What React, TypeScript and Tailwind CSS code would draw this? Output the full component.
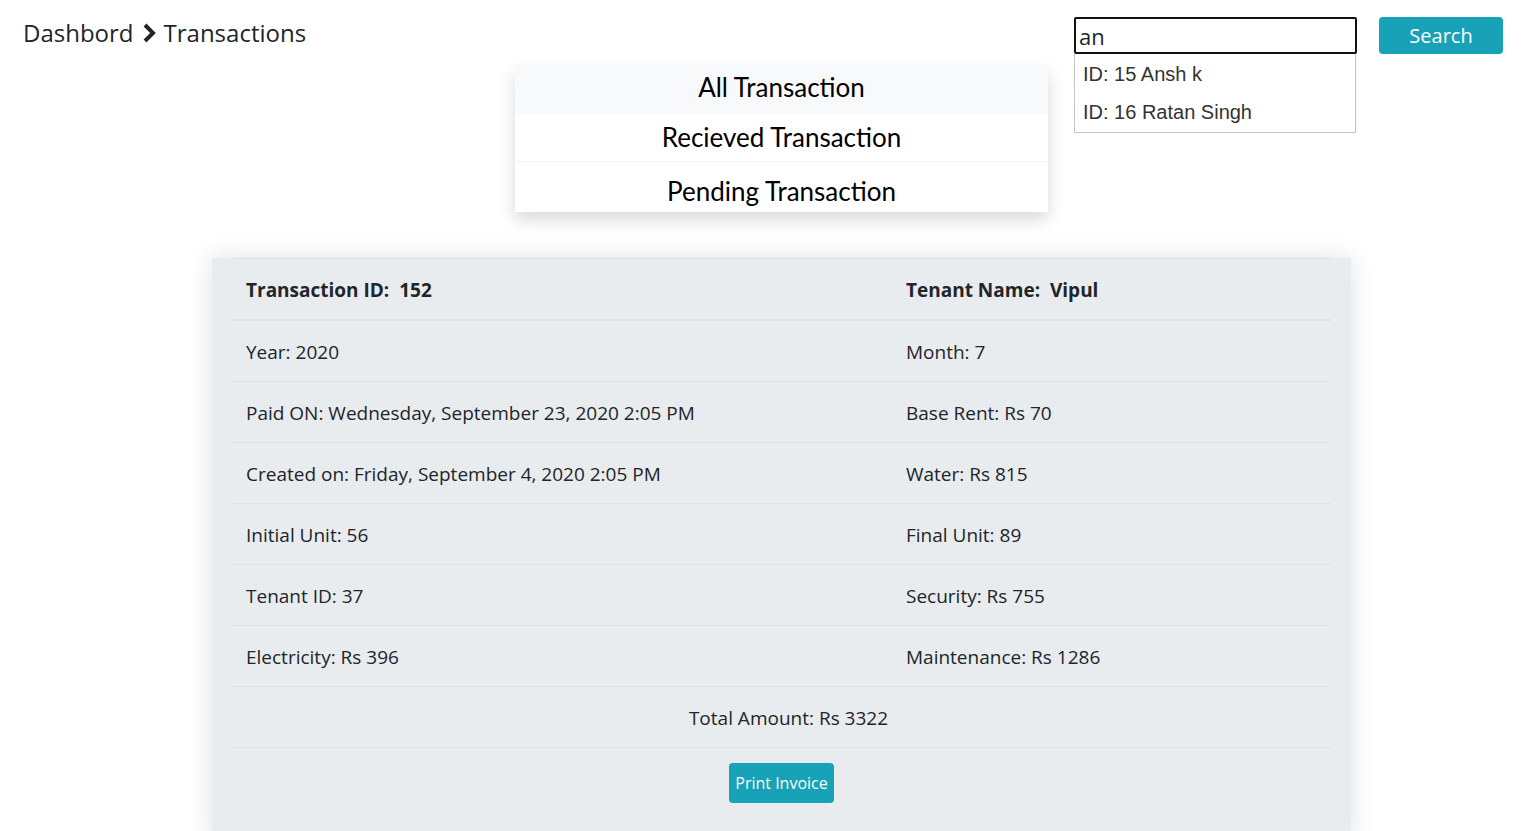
const rows: [string, string][] = [
  ['Year: 2020', 'Month: 7'],
  ['Paid ON: Wednesday, September 23, 2020 2:05 PM', 'Base Rent: Rs 70'],
  ['Created on: Friday, September 4, 2020 2:05 PM', 'Water: Rs 815'],
  ['Initial Unit: 56', 'Final Unit: 89'],
  ['Tenant ID: 37', 'Security: Rs 755'],
  ['Electricity: Rs 396', 'Maintenance: Rs 1286'],
]

const tabs = ['All Transaction', 'Recieved Transaction', 'Pending Transaction']

function Chevron() {
  return (
    <svg viewBox="0 0 16 22" className="w-[16px] h-[22px]">
      <path d="M4 3 L12 11 L4 19" fill="none" stroke="#212529" strokeWidth="4" strokeLinejoin="miter" />
    </svg>
  )
}

export default function App() {
  return (
    <main className="min-h-screen bg-white text-[#212529] font-['Open_Sans',sans-serif] overflow-hidden h-[831px]">
      <header className="flex items-start justify-between h-[65px]">
        <div className="flex items-center gap-[7px] pl-[23px] pt-[16px] text-[24px] leading-[34px]">
          <span>Dashbord</span>
          <Chevron />
          <span>Transactions</span>
        </div>
        <div className="flex items-start gap-[22px] pt-[17px] pr-[33px]">
          <div className="relative">
            <input
              value="an"
              readOnly
              className="w-[283px] h-[37px] border-2 border-[#111] rounded-[2px] px-[3px] text-[22px] outline-none"
            />
            <ul className="absolute left-0 top-[37px] w-[282px] bg-white border border-[#c4c4c4] border-t-0 font-['Liberation_Sans',Arial,sans-serif] text-[20px] text-[#333] py-[1px]">
              <li className="h-[38px] leading-[38px] px-[8px]">ID: 15 Ansh k</li>
              <li className="h-[38px] leading-[38px] px-[8px]">ID: 16 Ratan Singh</li>
            </ul>
          </div>
          <button className="w-[124px] h-[37px] bg-[#17a2b8] text-white rounded-[4px] text-[20px]">
            Search
          </button>
        </div>
      </header>

      <div className="ml-[212px] w-[1139px]">
        <nav className="mx-auto w-[533px] shadow-[0_8px_16px_rgba(0,0,0,0.15)] font-['Lato',sans-serif] text-[26px] text-black">
          <div className="h-[48px] bg-[#f8f9fa] flex items-center justify-center pb-[4px]">{tabs[0]}</div>
          <div className="h-[49px] bg-white border-b border-[#f3f3f3] flex items-center justify-center">{tabs[1]}</div>
          <div className="h-[50px] bg-white flex items-center justify-center pt-[8px]">{tabs[2]}</div>
        </nav>

        <section className="mt-[46px] bg-[#e9ecef] px-[20px] pb-[40px] shadow-[0_0_24px_rgba(0,0,0,0.12)] text-[19px]">
          <div className="grid grid-cols-[660px_1fr] h-[63px] items-center border-t border-b-2 border-[#dee2e6] font-bold px-[14px] pt-[2px]">
            <span>Transaction ID:&nbsp; 152</span>
            <span>Tenant Name:&nbsp; Vipul</span>
          </div>
          {rows.map(([a, b]) => (
            <div key={a} className="grid grid-cols-[660px_1fr] h-[61px] items-center border-b border-[#dee2e6] px-[14px] pt-[2px]">
              <span>{a}</span>
              <span>{b}</span>
            </div>
          ))}
          <div className="h-[61px] flex items-center justify-center border-b border-[#dee2e6] pl-[14px] pt-[2px]">
            Total Amount: Rs 3322
          </div>
          <div className="flex justify-center pt-[15px]">
            <button className="h-[40px] px-[6px] bg-[#17a2b8] text-white rounded-[4px] text-[16px]">
              Print Invoice
            </button>
          </div>
        </section>
      </div>
    </main>
  )
}
